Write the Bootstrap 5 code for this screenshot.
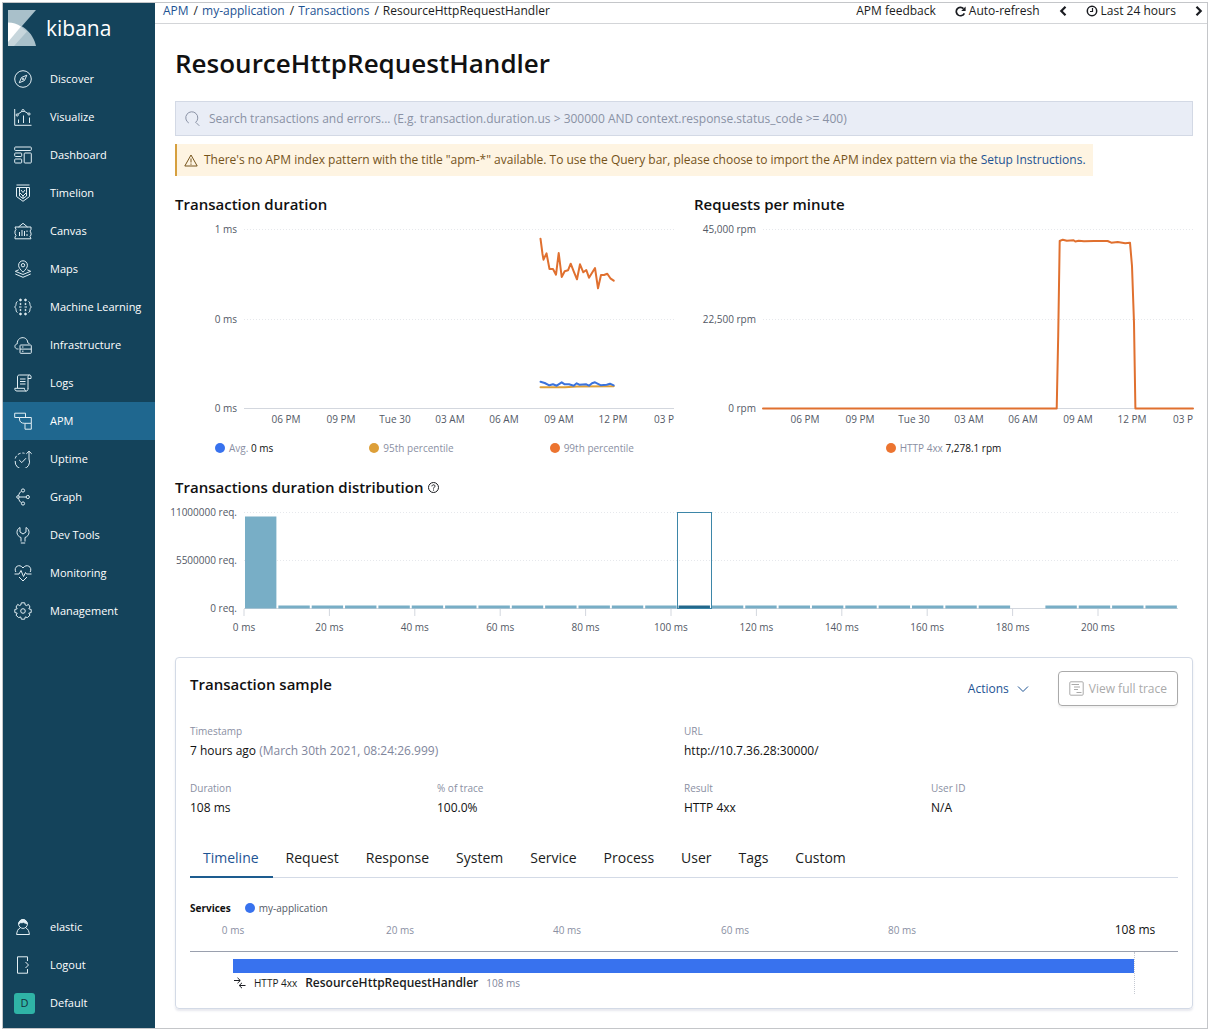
<!DOCTYPE html>
<html lang="en">
<head>
<meta charset="utf-8">
<meta name="viewport" content="width=device-width, initial-scale=1">
<title>ResourceHttpRequestHandler - Kibana</title>
<link href="https://cdn.jsdelivr.net/npm/bootstrap@5.3.0/dist/css/bootstrap.min.css" rel="stylesheet">
<style>
  body { font-family: "Open Sans", "Noto Sans", sans-serif; font-size: 12px; line-height: 18px; color: #1a1c21; background: #fff; padding: 2px 4px 5px 2px; }
  a { color: #1d5393; text-decoration: none; }
  .app-frame { min-height: calc(100vh - 7px); border: 1px solid #c4c6c9; }
  .side-nav { width: 152px; flex: none; background: #14435b; padding-bottom: 6px; }
  .brand-row { height: 57px; padding: 7px 5px 14px; gap: 10px; color: #fff; font-size: 21px; line-height: 36px; font-weight: 500; }
  .side-nav .nav-link { height: 38px; padding: 0 0 0 11px; gap: 15px; color: #fff; font-size: 11px; font-weight: 500; line-height: 18px; white-space: nowrap; }
  .side-nav .nav-link.active { background: #1f678f; }
  .side-nav .nav-link svg { width: 18px; height: 18px; flex: none; fill: none; stroke: #e3eff4; stroke-width: 1; }
  .side-nav .icon-slot { width: 21px; height: 21px; flex: none; display: flex; align-items: center; }
  .space-tile { width: 21px; height: 21px; border-radius: 3px; background: #2fb3a6; color: #14303c; font-size: 11px; }
  .top-bar { height: 21px; padding: 0 4px 4px 8px; border-bottom: 1px solid #d3d5d8; line-height: 16px; }
  .top-bar .breadcrumb-item { padding: 0; font-size: 12px; }
  .top-bar .breadcrumb-item + .breadcrumb-item::before { color: #1a1c21; padding: 0 4px 0 5px; }
  .top-tools { gap: 19px; }
  .top-tools button { border: 0; background: none; padding: 0; color: #1a1c21; gap: 3px; }
  .page-body { padding: 21px 14px 18px 20px; }
  h1 { font-size: 26px; line-height: 36px; font-weight: 600; margin-bottom: 20px; color: #111; }
  h2 { font-size: 15px; line-height: 24px; font-weight: 600; margin: 0; color: #111; }
  .query-bar { height: 35px; padding: 0 9px; gap: 9px; background: #e9edf6; border: 1px solid #d3d9e5; margin-bottom: 8px; }
  .query-bar input { border: 0; background: none; padding: 0; font-size: 12px; color: #1a1c21; outline: 0; }
  .query-bar input::placeholder { color: #8a92a5; opacity: 1; }
  .index-warning { height: 32px; padding: 0 7px 0 7px; gap: 6px; background: #fef4e2; border-left: 2px solid #d6a03f; color: #75531a; margin-bottom: 16px; }
  .chart-grid { gap: 20px; }
  .chart-grid > section { flex: 1 1 0; min-width: 0; }
  .plot { display: block; width: 100%; height: auto; font-size: 10px; overflow: visible; }
  .plot text { fill: #535966; }
  .plot .soft-tick { fill: #8a8fa3; }
  .plot .end-tick { fill: #111; font-size: 12px; }
  .grid-line { stroke: #e6e8ec; stroke-width: 1; stroke-dasharray: 1 2; }
  .base-line { stroke: #d3d7de; }
  .series { fill: none; stroke-width: 2; stroke-linejoin: round; stroke-linecap: round; }
  .legend-row { height: 18px; margin-top: 11px; padding: 0 40px; font-size: 10px; color: #8a8fa3; }
  .key-dot { width: 10px; height: 10px; border-radius: 50%; flex: none; }
  .key-item { gap: 4px; }
  .ink { color: #111; }
  .distribution { margin-top: 18px; }
  .sample-card { border: 1px solid #d3dae6; border-radius: 4px; box-shadow: 0 2px 2px rgba(100,110,150,.15); padding: 13px 14px 14px; margin-top: 17px; }
  .sample-card h2 { line-height: 26px; }
  .sample-tools { gap: 29px; }
  .trace-btn { height: 35px; padding: 0 10px; border: 1px solid #bfbfbf; border-radius: 4px; color: #aaa !important; font-size: 12px; gap: 5px; background: #fff; box-shadow: 0 2px 2px rgba(0,0,0,.06); opacity: 1 !important; }
  .actions-btn { border: 0; background: none; padding: 0; color: #1d5393; gap: 8px; }
  .facts { padding: 16px 0 3px; }
  .facts dt { font-weight: 400; font-size: 10px; line-height: 19px; color: #8a8fa3; }
  .facts dd { margin: 0 0 18px; line-height: 20px; color: #111; }
  .soft { color: #7f869c; }
  .nav-tabs.sample-tabs { border-bottom: 1px solid #d3dae6; height: 39px; }
  .sample-tabs .nav-link { border: 0; border-bottom: 2px solid transparent; border-radius: 0; margin: 0; padding: 9px 14px 8px 13px; height: 39px; color: #1a1c21; font-size: 14px; line-height: 20px; }
  .sample-tabs .nav-link.active { color: #1d5393; background: none; border-color: #1d5c8f; }
  .services-row { height: 18px; margin-top: 21px; font-size: 10px; color: #535966; gap: 14px; }
  .span-area { margin: 0 43px; height: 42px; padding-top: 7px; border-right: 1px dotted #c5c9d2; }
  .span-bar { height: 14px; background: #3872ee; }
  .span-label { height: 20px; gap: 8px; }
  .span-kind, .span-time { font-size: 10px; }
  .span-name { font-weight: 600; font-size: 12px; }
</style>
</head>
<body>
<div class="app-frame d-flex">
  <nav class="side-nav d-flex flex-column" aria-label="Main">
    <div class="brand-row d-flex align-items-center">
      <svg width="28" height="36" viewBox="0 0 28 36" aria-hidden="true">
        <path d="M0 0H28L0 32Z" fill="#a9c0ca"/>
        <path d="M0 12.500C13 12.500 25 22 28 36H0Z" fill="#a9c0ca"/>
        <path d="M12.500 16.500L19 21.500L6 36H0V31Z" fill="#c7d6dc"/>
        <path d="M0 12.500C5 12.500 9 14 13 16.500L0 32Z" fill="#fff"/>
      </svg>
      <span>kibana</span>
    </div>
    <div class="nav flex-column flex-nowrap">
      <a class="nav-link d-flex align-items-center" href="#"><span class="icon-slot"><svg viewBox="0 0 18 18"><circle cx="9" cy="9" r="8.300"/><path d="M12.800 5.200L10.500 10.500L5.200 12.800L7.500 7.500Z"/><circle cx="9" cy="9" r=".8"/></svg></span>Discover</a>
      <a class="nav-link d-flex align-items-center" href="#"><span class="icon-slot"><svg viewBox="0 0 18 18"><path d="M.7 1V17.300H17.500M4.500 15V11.500M9.500 15V7.500M15.500 15V9.500M4 6.200L8 3.300M10 3L14 5.500"/><circle cx="3.200" cy="7" r="1.100"/><circle cx="9" cy="2.600" r="1.100"/><circle cx="15" cy="6" r="1.100"/></svg></span>Visualize</a>
      <a class="nav-link d-flex align-items-center" href="#"><span class="icon-slot"><svg viewBox="0 0 18 18"><rect x=".7" y="1" width="16.600" height="3.500" rx=".8"/><rect x=".7" y="7" width="7" height="3.500" rx=".8"/><rect x=".7" y="13" width="7" height="4" rx=".8"/><rect x="10.200" y="7" width="7.100" height="10" rx=".8"/></svg></span>Dashboard</a>
      <a class="nav-link d-flex align-items-center" href="#"><span class="icon-slot"><svg viewBox="0 0 18 18"><path d="M2.500 1H15.500M2.500 3.500H15.500V12.500L9 17.300L2.500 12.500ZM5.500 3.500V8.500L9 12L12.500 8.500V3.500M7 6L9 8.500L11 6M9 12V14.500M5.500 8.500V12L9 14.500L12.500 12V8.500"/></svg></span>Timelion</a>
      <a class="nav-link d-flex align-items-center" href="#"><span class="icon-slot"><svg viewBox="0 0 18 18"><path d="M4.500 5L9 1.300L13.500 5M1 5H17V7.500L16 9L17 11V13L16 14.500L17 16.800H1V15L2 13.500L1 11.500V9L2 7.500ZM5.500 14V10M8 14V8M10.500 14V9M13 14V12M13 10V8.500"/></svg></span>Canvas</a>
      <a class="nav-link d-flex align-items-center" href="#"><span class="icon-slot"><svg viewBox="0 0 18 18"><path d="M9 12.200C6.500 9.500 4.600 7.800 4.600 5.200A4.400 4.400 0 0 1 13.400 5.200C13.400 7.800 11.500 9.500 9 12.200Z"/><circle cx="9" cy="5.200" r="1.700"/><path d="M4.800 9.800L1.300 11.300L9 14.500L16.700 11.300L13.200 9.800M1.300 14L9 17.300L16.700 14"/></svg></span>Maps</a>
      <a class="nav-link d-flex align-items-center" href="#"><span class="icon-slot"><svg viewBox="0 0 18 18"><path d="M3.500 3.500C1.800 4 2.300 6 1.800 7.500L.7 9L1.800 10.500C2.300 12 1.800 14 3.500 14.500M14.500 3.500C16.200 4 15.700 6 16.200 7.500L17.300 9L16.200 10.500C15.700 12 16.200 14 14.500 14.500M7.500 9H5M13 9H10.500"/><g fill="#e3eff4"><circle cx="6.500" cy="2" r=".9"/><circle cx="11.500" cy="2" r=".9"/><circle cx="6.500" cy="16" r=".9"/><circle cx="11.500" cy="16" r=".9"/><circle cx="6.500" cy="6" r=".6"/><circle cx="11.500" cy="6" r=".6"/><circle cx="6.500" cy="12" r=".6"/><circle cx="11.500" cy="12" r=".6"/></g></svg></span>Machine Learning</a>
      <a class="nav-link d-flex align-items-center" href="#"><span class="icon-slot"><svg viewBox="0 0 18 18"><path d="M4.500 13H3.500C.2 12.800 0 8.300 3.200 7.900C3 0 13.500-.5 13.800 6.800M15.500 8C15 7.200 14.500 7 13.800 6.800"/><rect x="6" y="9" width="11.300" height="8.300" rx=".7"/><path d="M6 13.100H17.300M8 11H9.500M8 15.200H9.500"/></svg></span>Infrastructure</a>
      <a class="nav-link d-flex align-items-center" href="#"><span class="icon-slot"><svg viewBox="0 0 18 18"><path d="M3.500 14V3C3.500 1.500 4.300 1 5.500 1H15.500C17 1 17.300 2.500 17 4.500H14M14 15V3C14 1.800 14.500 1 15.500 1M14 14.500C14 16.300 13.300 17 12.300 17H3C1.300 17 .8 16 .8 14.300H10.500C10.500 16 11 17 12.300 17M6 5H11.500M6 7.500H11.500M6 10H11.500"/></svg></span>Logs</a>
      <a class="nav-link active d-flex align-items-center" href="#" aria-current="page"><span class="icon-slot"><svg viewBox="0 0 18 18"><path d="M5.500 5.500H.7V1.200H11.500V5.500M5.500 5.500V7C5.500 10 7.500 11.300 10.500 11.300H17.300V5.500H5.500M11 11.300V17.200H17.300V11.300"/></svg></span>APM</a>
      <a class="nav-link d-flex align-items-center" href="#"><span class="icon-slot"><svg viewBox="0 0 18 18"><path d="M1.200 11A7.200 7.200 0 1 0 15 9V1.200M12.300 3.800L15 1.200L17.700 3.800M5.200 10L7.800 12.600L12 8.200"/><path d="M1.200 8.500A7.500 7.500 0 0 1 10.500 3.300" stroke-dasharray="3 1.800"/></svg></span>Uptime</a>
      <a class="nav-link d-flex align-items-center" href="#"><span class="icon-slot"><svg viewBox="0 0 18 18"><circle cx="9" cy="2.500" r="1.600"/><circle cx="9" cy="15.500" r="1.600"/><circle cx="13.800" cy="9" r="1.600"/><circle cx="4" cy="9" r="1.300"/><path d="M5.300 9H12.200M4.600 7.800C5 5.500 6 4 7.500 3.200M4.600 10.200C5 12.500 6 14 7.500 14.800"/></svg></span>Graph</a>
      <a class="nav-link d-flex align-items-center" href="#"><span class="icon-slot"><svg viewBox="0 0 18 18"><path d="M6.800 17H11.200M7 15.500V11.500C2 10 1.700 3.500 6 1.500V6L9 8L12 6V1.500C16.300 3.500 16 10 11 11.500V15.500"/></svg></span>Dev Tools</a>
      <a class="nav-link d-flex align-items-center" href="#"><span class="icon-slot"><svg viewBox="0 0 18 18"><path d="M1.800 8C-.8 3 5.500-1 9 4C12.500-1 18.800 3 16.200 8M.5 10H5L7 6.500L9.500 12.500L11.500 8.500L12.500 10H17.500M5 13L9 17L13 13"/></svg></span>Monitoring</a>
      <a class="nav-link d-flex align-items-center" href="#"><span class="icon-slot"><svg viewBox="0 0 18 18"><circle cx="9" cy="9" r="2.300"/><path d="M7.300 .8H10.700L11.200 3L12.500 3.600L14.500 2.400L16 5L14.800 6.800L17.200 7.500V10.500L14.800 11.200L16 13.200L13.400 15.600L11.300 14.900L10.600 17.200H7.400L6.700 14.900L4.600 15.600L2 13.200L3.200 11.200L.8 10.500V7.500L3.200 6.800L2 5L3.700 2.400L5.600 3.600L6.800 3Z"/></svg></span>Management</a>
    </div>
    <div class="nav flex-column flex-nowrap mt-auto">
      <a class="nav-link d-flex align-items-center" href="#"><span class="icon-slot"><svg viewBox="0 0 18 18"><circle cx="9" cy="6" r="4.400"/><path d="M4.800 6C5.500 3.500 8 5.500 9.500 4.300C11 5.500 12.500 5 13.200 6C13 0 5 0 4.800 6Z" fill="#e3eff4"/><path d="M6 10C4 11 3 13 2.600 16.500H15.400C15 13 14 11 12 10"/></svg></span>elastic</a>
      <a class="nav-link d-flex align-items-center" href="#"><span class="icon-slot"><svg viewBox="0 0 18 18"><path d="M13.500 5V.8H3.500V17.200H13.500V13M11.500 6L14.500 9L11.500 12"/></svg></span>Logout</a>
      <a class="nav-link d-flex align-items-center" href="#"><span class="space-tile d-flex align-items-center justify-content-center">D</span>Default</a>
    </div>
  </nav>

  <div class="flex-grow-1">
    <header class="top-bar d-flex justify-content-between align-items-center">
      <nav aria-label="breadcrumb">
        <ol class="breadcrumb mb-0">
          <li class="breadcrumb-item"><a href="#">APM</a></li>
          <li class="breadcrumb-item"><a href="#">my-application</a></li>
          <li class="breadcrumb-item"><a href="#">Transactions</a></li>
          <li class="breadcrumb-item" aria-current="page">ResourceHttpRequestHandler</li>
        </ol>
      </nav>
      <div class="top-tools d-flex align-items-center">
        <button type="button">APM feedback</button>
        <button type="button" class="d-flex align-items-center"><svg width="11" height="11" viewBox="0 0 11 11" aria-hidden="true"><path d="M9.300 7.300A4.200 4.200 0 1 1 8.500 2.600" fill="none" stroke="#1a1c21" stroke-width="1.700"/><path d="M10.600 .6V5H6.200Z" fill="#1a1c21"/></svg>Auto-refresh</button>
        <button type="button" aria-label="Previous period" class="d-flex"><svg width="8" height="10" viewBox="0 0 8 10"><path d="M6.500 .8L2.300 5L6.500 9.200" fill="none" stroke="#1a1c21" stroke-width="2.200"/></svg></button>
        <button type="button" class="d-flex align-items-center"><svg width="12" height="12" viewBox="0 0 12 12" aria-hidden="true"><circle cx="6" cy="6" r="4.700" fill="none" stroke="#1a1c21" stroke-width="1.500"/><path d="M6.500 3V6.500H4" fill="none" stroke="#1a1c21" stroke-width="1.200"/></svg>Last 24 hours</button>
        <button type="button" aria-label="Next period" class="d-flex"><svg width="8" height="10" viewBox="0 0 8 10"><path d="M1.500 .8L5.700 5L1.500 9.200" fill="none" stroke="#1a1c21" stroke-width="2.200"/></svg></button>
      </div>
    </header>

    <main class="page-body">
      <h1>ResourceHttpRequestHandler</h1>
      <div class="query-bar d-flex align-items-center">
        <svg width="15" height="16" viewBox="0 0 15 16" aria-hidden="true"><path d="M3.800 12A6 6 0 1 1 10.500 11.500M11 11.500L14.300 14.800" fill="none" stroke="#8a92a5" stroke-width="1"/></svg>
        <input class="flex-grow-1" type="text" aria-label="Search transactions and errors" placeholder="Search transactions and errors... (E.g. transaction.duration.us &gt; 300000 AND context.response.status_code &gt;= 400)">
      </div>
      <div class="d-flex">
        <div class="index-warning d-flex align-items-center" role="alert">
          <svg width="14" height="13" viewBox="0 0 14 13" aria-hidden="true"><path d="M7 1L13.200 12H.8ZM7 4.500V8.500M7 9.500V10.800" fill="none" stroke="#75531a" stroke-width="1"/></svg>
          <span>There's no APM index pattern with the title "apm-*" available. To use the Query bar, please choose to import the APM index pattern via the <a href="#">Setup Instructions.</a></span>
        </div>
      </div>

      <div class="chart-grid d-flex">
        <section>
          <h2>Transaction duration</h2>
          <svg class="plot" viewBox="0 0 499 212" role="img" aria-label="Transaction duration">
            <path class="grid-line" d="M69 13.500H499M69 103.500H499"/>
            <path class="base-line" d="M69 192.500H499"/>
            <g text-anchor="end"><text x="62" y="17">1 ms</text><text x="62" y="107">0 ms</text><text x="62" y="196">0 ms</text></g>
            <g text-anchor="middle"><text x="111" y="207">06 PM</text><text x="166" y="207">09 PM</text><text x="220" y="207">Tue 30</text><text x="275" y="207">03 AM</text><text x="329" y="207">06 AM</text><text x="384" y="207">09 AM</text><text x="438" y="207">12 PM</text></g>
            <text x="479" y="207">03 P</text>
            <polyline class="series" stroke="#e0702f" points="365.500,22.700 367.500,38 368.500,43.700 371.500,37.300 374.500,53 378,53 381,58.700 383.700,37 386.700,61 389.700,55.300 393,54.300 395.700,47.700 398.700,55.300 402,63.300 405,48.300 408.300,56.300 411.300,54 414,61.700 420,52 423,72.300 426,59 429,59 432.300,57.700 435.700,62.700 438.700,64.700"/>
            <polyline class="series" stroke="#dd9f38" points="365.500,171.300 390,171.300 402,170.600 438.700,170.300"/>
            <polyline class="series" stroke="#3b73dc" points="365.500,165.700 369.700,167 374.300,169.300 378,168.300 381.700,169.700 386.700,166.300 389.700,168.300 394,168.300 398.700,169.700 401.700,167.300 404.300,168.700 411.300,168.300 414,169.700 417,167.300 420,166.300 426,169.300 431.700,168.700 435,167.700 438.700,169.300"/>
          </svg>
          <div class="legend-row d-flex justify-content-between align-items-center">
            <span class="key-item d-flex align-items-center"><span class="key-dot" style="background:#3872ee"></span><span>Avg. <span class="ink">0 ms</span></span></span>
            <span class="key-item d-flex align-items-center"><span class="key-dot" style="background:#dd9f38"></span>95th percentile</span>
            <span class="key-item d-flex align-items-center"><span class="key-dot" style="background:#ec7430"></span>99th percentile</span>
          </div>
        </section>
        <section>
          <h2>Requests per minute</h2>
          <svg class="plot" viewBox="0 0 499 212" role="img" aria-label="Requests per minute">
            <path class="grid-line" d="M69 13.500H499M69 103.500H499"/>
            <path class="base-line" d="M69 192.500H499"/>
            <g text-anchor="end"><text x="62" y="17">45,000 rpm</text><text x="62" y="107">22,500 rpm</text><text x="62" y="196">0 rpm</text></g>
            <g text-anchor="middle"><text x="111" y="207">06 PM</text><text x="166" y="207">09 PM</text><text x="220" y="207">Tue 30</text><text x="275" y="207">03 AM</text><text x="329" y="207">06 AM</text><text x="384" y="207">09 AM</text><text x="438" y="207">12 PM</text></g>
            <text x="479" y="207">03 P</text>
            <polyline class="series" stroke="#e0702f" stroke-linecap="butt" points="69,192.500 362.700,192.500 364.200,120 365.700,25 368.800,23.700 372.800,24.700 379.600,24.300 381.300,25.500 384.700,24.700 390,25.300 400,25 413.600,25 417.300,26.700 423.700,26 431.200,27.300 436,26.700 438,50 440,107 441.400,192.500 499,192.500"/>
          </svg>
          <div class="legend-row d-flex justify-content-center align-items-center">
            <span class="key-item d-flex align-items-center"><span class="key-dot" style="background:#ec7430"></span><span>HTTP 4xx <span class="ink">7,278.1 rpm</span></span></span>
          </div>
        </section>
      </div>

      <section class="distribution">
        <h2 class="d-flex align-items-center gap-1">Transactions duration distribution
          <svg width="13" height="13" viewBox="0 0 13 13" role="img" aria-label="Help"><circle cx="6.500" cy="6.500" r="5" fill="none" stroke="#1a1c21"/><path d="M4.900 5.300C5 3.300 8.200 3.400 8 5.300C7.900 6.200 6.500 6.200 6.500 7.600M6.500 8.500V9.600" fill="none" stroke="#1a1c21"/></svg>
        </h2>
        <svg class="plot" viewBox="0 0 1018 141" role="img" aria-label="Transactions duration distribution">
          <path class="grid-line" d="M69 13.500H1003M69 61.500H1003"/>
          <path class="base-line" d="M69 109.500H1003"/>
          <g text-anchor="end"><text x="62" y="17">11000000 req.</text><text x="62" y="65">5500000 req.</text><text x="62" y="113">0 req.</text></g>
          <g id="bins" fill="#78aec6"></g>
          <g id="ticks" text-anchor="middle"></g>
          <rect x="502.500" y="13.500" width="34" height="96" fill="none" stroke="#3d86a8"/>
        </svg>
      </section>

      <section class="sample-card">
        <div class="d-flex justify-content-between">
          <h2>Transaction sample</h2>
          <div class="sample-tools d-flex align-items-center">
            <button type="button" class="actions-btn d-flex align-items-center">Actions <svg width="12" height="8" viewBox="0 0 12 8" aria-hidden="true"><path d="M1 1.500L6 6.500L11 1.500" fill="none" stroke="#1d5393"/></svg></button>
            <button type="button" class="btn trace-btn d-flex align-items-center" disabled><svg width="15" height="15" viewBox="0 0 15 15" aria-hidden="true"><g fill="none" stroke="#aaa"><rect x=".8" y=".8" width="13.400" height="13.400" rx="1"/><path d="M2.500 3.500H10M5 6H11M5 8.500H9M7.500 11.500H12.500"/></g></svg>View full trace</button>
          </div>
        </div>
        <dl class="facts row g-0 mb-0">
          <div class="col-6"><dt>Timestamp</dt><dd>7 hours ago <span class="soft">(March 30th 2021, 08:24:26.999)</span></dd></div>
          <div class="col-6"><dt>URL</dt><dd>http://10.7.36.28:30000/</dd></div>
          <div class="col-3"><dt>Duration</dt><dd>108 ms</dd></div>
          <div class="col-3"><dt>% of trace</dt><dd>100.0%</dd></div>
          <div class="col-3"><dt>Result</dt><dd>HTTP 4xx</dd></div>
          <div class="col-3"><dt>User ID</dt><dd>N/A</dd></div>
        </dl>
        <ul class="nav nav-tabs sample-tabs flex-nowrap">
          <li class="nav-item"><a class="nav-link active" href="#">Timeline</a></li>
          <li class="nav-item"><a class="nav-link" href="#">Request</a></li>
          <li class="nav-item"><a class="nav-link" href="#">Response</a></li>
          <li class="nav-item"><a class="nav-link" href="#">System</a></li>
          <li class="nav-item"><a class="nav-link" href="#">Service</a></li>
          <li class="nav-item"><a class="nav-link" href="#">Process</a></li>
          <li class="nav-item"><a class="nav-link" href="#">User</a></li>
          <li class="nav-item"><a class="nav-link" href="#">Tags</a></li>
          <li class="nav-item"><a class="nav-link" href="#">Custom</a></li>
        </ul>
        <div class="services-row d-flex align-items-center">
          <b class="ink">Services</b>
          <span class="key-item d-flex align-items-center"><span class="key-dot" style="background:#3872ee"></span>my-application</span>
        </div>
        <svg class="plot" viewBox="0 0 988 35" role="img" aria-label="Trace time axis">
          <g text-anchor="middle"><text class="soft-tick" x="43" y="17">0 ms</text><text class="soft-tick" x="210" y="17">20 ms</text><text class="soft-tick" x="377" y="17">40 ms</text><text class="soft-tick" x="545" y="17">60 ms</text><text class="soft-tick" x="712" y="17">80 ms</text></g>
          <text class="end-tick" x="945" y="17" text-anchor="middle">108 ms</text>
          <path d="M0 34.500H988" stroke="#9aa0ae"/>
        </svg>
        <div class="span-area">
          <div class="span-bar"></div>
          <div class="span-label d-flex align-items-center">
            <svg width="13" height="12" viewBox="0 0 13 12" aria-hidden="true"><path d="M1 3.500H7M4.500 .8L7.300 3.500L4.500 6.200M12.500 8.500H6.500M9 5.800L6.200 8.500L9 11.200" fill="none" stroke="#1a1c21"/></svg>
            <span class="span-kind">HTTP 4xx</span>
            <span class="span-name">ResourceHttpRequestHandler</span>
            <span class="span-time soft">108 ms</span>
          </div>
        </div>
      </section>
    </main>
  </div>
</div>
<script>
  // Buckets and axis ticks of the distribution chart
  const NS = 'http://www.w3.org/2000/svg';
  const bins = document.getElementById('bins'), ticks = document.getElementById('ticks');
  for (let i = 0; i < 28; i++) {
    if (i === 23) continue;
    const r = document.createElementNS(NS, 'rect'), h = i === 0 ? 92 : 3;
    r.setAttribute('x', 70 + i * 33.35);
    r.setAttribute('y', 109.500 - h);
    r.setAttribute('width', 31.400);
    r.setAttribute('height', h);
    if (i === 13) r.setAttribute('fill', '#22688c');
    bins.append(r);
  }
  for (let ms = 0; ms <= 200; ms += 20) {
    const x = 69 + ms * 4.27;
    const p = document.createElementNS(NS, 'path');
    p.setAttribute('d', `M${x} 110V117`);
    p.setAttribute('class', 'base-line');
    const t = document.createElementNS(NS, 'text');
    t.setAttribute('x', x);
    t.setAttribute('y', 132);
    t.textContent = ms + ' ms';
    ticks.append(p, t);
  }
</script>
<script src="https://cdn.jsdelivr.net/npm/bootstrap@5.3.0/dist/js/bootstrap.bundle.min.js"></script>
</body>
</html>
